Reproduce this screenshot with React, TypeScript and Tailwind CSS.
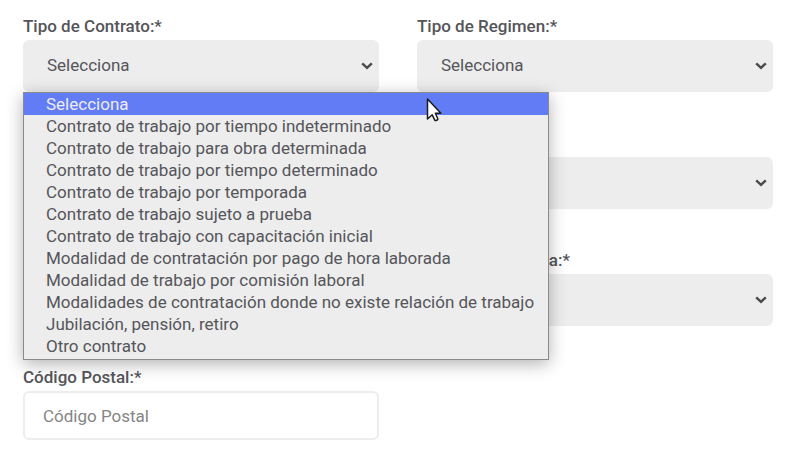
import React, { useState } from 'react';

const CONTRATOS = [
  "Selecciona",
  "Contrato de trabajo por tiempo indeterminado",
  "Contrato de trabajo para obra determinada",
  "Contrato de trabajo por tiempo determinado",
  "Contrato de trabajo por temporada",
  "Contrato de trabajo sujeto a prueba",
  "Contrato de trabajo con capacitación inicial",
  "Modalidad de contratación por pago de hora laborada",
  "Modalidad de trabajo por comisión laboral",
  "Modalidades de contratación donde no existe relación de trabajo",
  "Jubilación, pensión, retiro",
  "Otro contrato"
];

interface SelectFieldProps {
  id: string;
  label: string;
  options?: string[];
  value?: string;
  covered?: boolean;
  onChange?: (value: string) => void;
  onOpen?: () => void;
  children?: React.ReactNode;
}

const SelectField: React.FC<SelectFieldProps> = ({ id, label, options = ["Selecciona"], value, covered, onChange, onOpen, children }) => {
  const [own, setOwn] = useState(options[0]);

  return (
    <div className="relative">
      <label htmlFor={id} className={`block font-medium leading-6 mb-0.5 ${covered ? 'invisible' : ''}`}>{label}</label>
      <div className="grid items-center">
        <select
          id={id}
          value={value ?? own}
          onChange={(e) => (onChange ?? setOwn)(e.target.value)}
          onMouseDown={(e) => {
            if (!onOpen) return;
            e.preventDefault();
            onOpen();
          }}
          className="col-start-1 row-start-1 w-full h-[52px] appearance-none rounded-md bg-[#ededed] pl-6 pr-8 outline-none"
        >
          {options.map((option) => (
            <option key={option}>{option}</option>
          ))}
        </select>
        <svg viewBox="0 0 12 8" className="col-start-1 row-start-1 justify-self-end mr-1.5 w-3 h-2 pointer-events-none" fill="none" stroke="#4a4a4a" strokeWidth="2.4">
          <path d="M1.2 1.3 6 5.9l4.8-4.6" />
        </svg>
      </div>
      {children}
    </div>
  );
};

const Pointer: React.FC = () => (
  <svg viewBox="0 0 16 25" className="absolute left-[402px] top-1 w-4 h-[25px] pointer-events-none" aria-hidden="true">
    <path
      d="M1.500 2v20l4.700-4.200 2.600 5.300c.6 1.100 3.500-.2 3-1.400l-2.400-5.400h5.500z"
      fill="#fff"
      stroke="#1c1c1c"
      strokeWidth="1.5"
      strokeLinejoin="round"
    />
  </svg>
);

const App: React.FC = () => {
  const [open, setOpen] = useState(true);
  const [contrato, setContrato] = useState(CONTRATOS[0]);
  const [active, setActive] = useState(0);

  return (
    <form className="grid grid-cols-2 gap-x-[38px] gap-y-[39px] pt-3.5 pb-4 pl-[23px] pr-6 bg-white text-[17px] text-[#55555a] font-[Roboto,sans-serif]">
      <SelectField
        id="contrato"
        label="Tipo de Contrato:*"
        options={CONTRATOS}
        value={contrato}
        onChange={setContrato}
        onOpen={() => setOpen(!open)}
      >
        {/* Option list, drawn over the fields below */}
        {open && (
          <div className="absolute left-0 top-full z-10 border border-[#8a8a8a] bg-[#ededed] shadow-[0_4px_16px_rgba(0,0,0,0.3)]">
            <ul role="listbox" aria-label="Tipo de Contrato" className="pb-0.5">
              {CONTRATOS.map((option, i) => (
                <li
                  key={option}
                  role="option"
                  aria-selected={option === contrato}
                  onMouseEnter={() => setActive(i)}
                  onClick={() => {
                    setContrato(option);
                    setOpen(false);
                  }}
                  className={`pl-[22px] pr-3.5 leading-[22px] whitespace-nowrap cursor-default ${active === i ? 'bg-[#627cf6] text-[#ededed]' : ''}`}
                >
                  {option}
                </li>
              ))}
            </ul>
            <Pointer />
          </div>
        )}
      </SelectField>
      <SelectField id="regimen" label="Tipo de Regimen:*" />
      <SelectField id="jornada" label="Tipo de Jornada:*" covered={open} />
      <SelectField id="riesgo" label="Riesgo Puesto:*" covered={open} />
      <SelectField id="periodicidad" label="Periodicidad:*" covered={open} />
      <SelectField id="entidad" label="Entidad Federativa:*" />

      <div>
        <label htmlFor="postal" className="block font-medium leading-6 mb-0.5">Código Postal:*</label>
        <input
          id="postal"
          type="text"
          placeholder="Código Postal"
          className="w-full h-[49px] rounded-md border-2 border-[#ededed] bg-white px-[18px] outline-none placeholder:text-[#858585]"
        />
      </div>
    </form>
  );
};

export default App;
